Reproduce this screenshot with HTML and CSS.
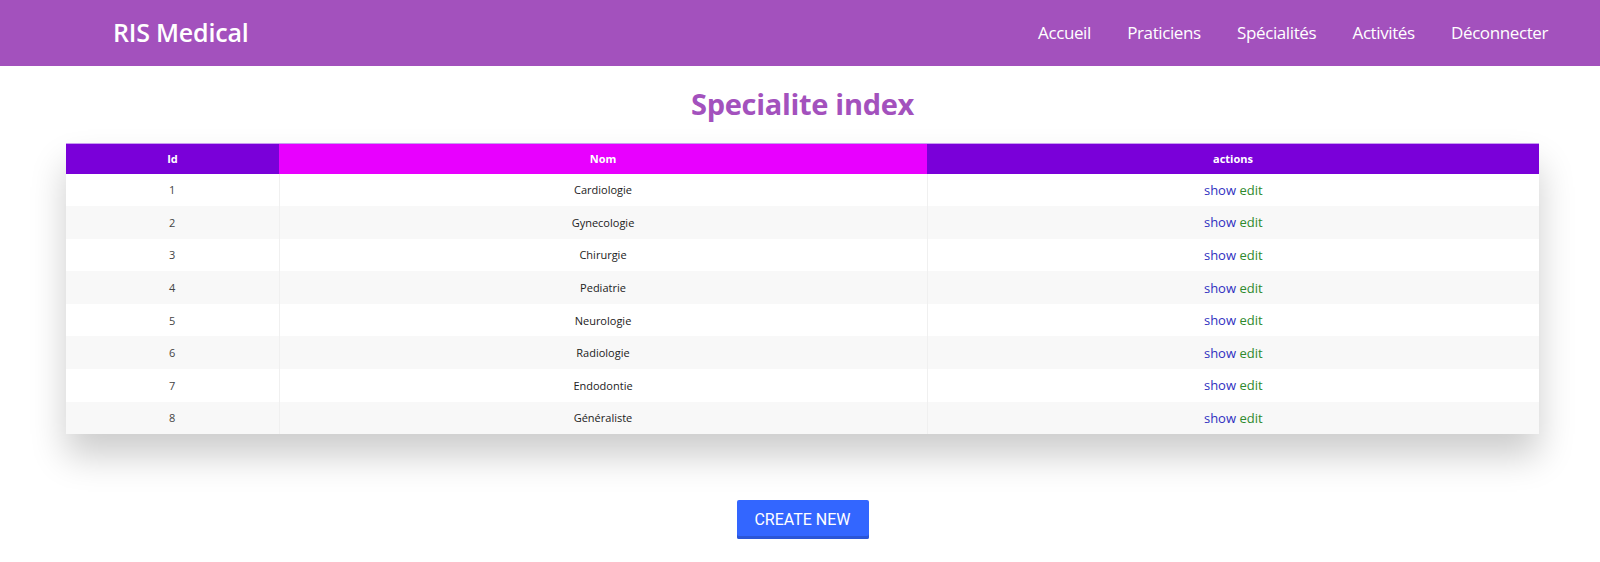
FILE: index.html
```html
<!DOCTYPE html>
<html lang="fr">
<head>
<meta charset="utf-8">
<title>Specialite index</title>
<link rel="stylesheet" href="styles.css">
</head>
<body>
<nav class="navbar">
  <a class="brand" href="#">RIS Medical</a>
  <ul class="nav-links">
    <li><a href="#">Accueil</a></li>
    <li><a href="#">Praticiens</a></li>
    <li><a href="#">Spécialités</a></li>
    <li><a href="#">Activités</a></li>
    <li><a href="#">Déconnecter</a></li>
  </ul>
</nav>
<main class="content">
  <h1 class="page-title">Specialite index</h1>
  <table class="data-table">
    <thead>
      <tr>
        <th class="col-id">Id</th>
        <th class="col-nom">Nom</th>
        <th class="col-actions">actions</th>
      </tr>
    </thead>
    <tbody>
      <tr><td>1</td><td>Cardiologie</td><td class="actions"><a class="show" href="#">show</a> <a class="edit" href="#">edit</a></td></tr>
      <tr><td>2</td><td>Gynecologie</td><td class="actions"><a class="show" href="#">show</a> <a class="edit" href="#">edit</a></td></tr>
      <tr><td>3</td><td>Chirurgie</td><td class="actions"><a class="show" href="#">show</a> <a class="edit" href="#">edit</a></td></tr>
      <tr><td>4</td><td>Pediatrie</td><td class="actions"><a class="show" href="#">show</a> <a class="edit" href="#">edit</a></td></tr>
      <tr><td>5</td><td>Neurologie</td><td class="actions"><a class="show" href="#">show</a> <a class="edit" href="#">edit</a></td></tr>
      <tr><td>6</td><td>Radiologie</td><td class="actions"><a class="show" href="#">show</a> <a class="edit" href="#">edit</a></td></tr>
      <tr><td>7</td><td>Endodontie</td><td class="actions"><a class="show" href="#">show</a> <a class="edit" href="#">edit</a></td></tr>
      <tr><td>8</td><td>Généraliste</td><td class="actions"><a class="show" href="#">show</a> <a class="edit" href="#">edit</a></td></tr>
    </tbody>
  </table>
  <div class="btn-row">
    <a class="btn-create" href="#">Create new</a>
  </div>
</main>
</body>
</html>
```

FILE: styles.css
```css
* { box-sizing: border-box; }

body {
  margin: 0;
  font-family: "Open Sans", "Noto Sans", sans-serif;
  background: #ffffff;
  color: #222;
}

a { text-decoration: none; }

.navbar {
  height: 66px;
  background: #a351bd;
  display: flex;
  align-items: center;
  justify-content: space-between;
  padding: 0 33px 2px 113px;
}

.brand {
  color: #ffffff;
  font-weight: 600;
  font-size: 25px;
  letter-spacing: -0.2px;
}

.nav-links {
  list-style: none;
  margin: 0;
  padding: 0;
  display: flex;
}

.nav-links a {
  display: block;
  padding: 0 18.2px;
  color: #ffffff;
  font-size: 17px;
  letter-spacing: -0.4px;
}

.nav-links li:last-child a { padding-right: 19px; }

.content {
  padding: 0 61px 0 66px;
}

.page-title {
  margin: 0;
  height: 77px;
  display: flex;
  align-items: center;
  justify-content: center;
  color: #a351bd;
  font-size: 29px;
  font-weight: 700;
  letter-spacing: -0.3px;
  padding-bottom: 3px;
}

.data-table {
  width: 100%;
  border-collapse: collapse;
  box-shadow: 0 22px 34px rgba(0, 0, 0, 0.2);
  font-size: 11px;
}

.data-table th {
  height: 30px;
  color: #ffffff;
  font-weight: 700;
  font-size: 11px;
  border-top: 1px solid #c79bf0;
  padding: 0;
}

.col-id { width: 213px; background: #7a00d9; }
.col-nom { width: 648px; background: #e800ff; }
.col-actions { background: #7a00d9; }

.data-table td {
  height: 32.6px;
  padding: 0;
  text-align: center;
  color: #222;
  border-right: 1px solid #f0f0f0;
}

.data-table td:last-child { border-right: none; }

.data-table tbody tr:nth-child(odd) { background: #ffffff; }
.data-table tbody tr:nth-child(even) { background: #f8f8f8; }

.data-table td:first-child { color: #444; }

.actions { font-size: 13px; font-weight: 500; }
.show { color: #2f2fc0; }
.edit { color: #2e8a2e; }

.btn-row {
  display: flex;
  justify-content: center;
  padding-top: 66px;
}

.btn-create {
  display: inline-flex;
  align-items: center;
  justify-content: center;
  width: 132px;
  height: 39px;
  background: #3366ff;
  color: #ffffff;
  font-family: Roboto, "Liberation Sans", sans-serif;
  font-size: 16px;
  font-weight: 400;
  text-transform: uppercase;
  border-radius: 2px;
  box-shadow: inset 0 -3px 0 #2b55d6;
}
```
